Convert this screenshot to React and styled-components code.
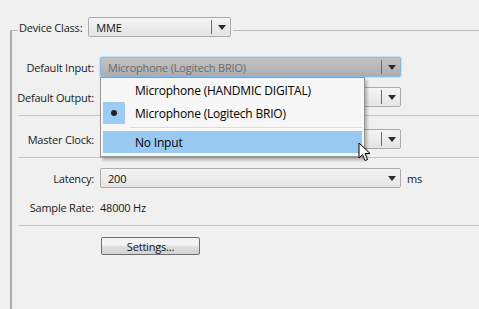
import React from 'react'
import styled, { createGlobalStyle } from 'styled-components'

const Global = createGlobalStyle`
	html, body {
		margin: 0;
		background: #f0f0f0;
		overflow: hidden;
	}
	body {
		font-family: "Open Sans", "Noto Sans", sans-serif;
		font-size: 11px;
		letter-spacing: -0.2px;
		color: #1a1a1a;
	}
`

const Page = styled.div`
	position: relative;
	width: 479px;
	height: 309px;
	padding-top: 30px;
	box-sizing: border-box;
	overflow: hidden;
`

const Frame = styled.div`
	margin-left: 10px;
	border-left: 2px solid #adadad;
	border-top: 1px solid #bcbcbc;
	height: 290px;
`

const Header = styled.div`
	display: flex;
	width: fit-content;
	align-items: center;
	margin-top: -14px;
	margin-left: 6px;
	padding: 0 2px 0 1px;
	gap: 6px;
	background: #f0f0f0;
	height: 20px;
`

const Label = styled.span`
	text-align: right;
	white-space: nowrap;
`

const Combo = styled.div`
	position: relative;
	box-sizing: border-box;
	width: ${p => p.$w}px;
	height: ${p => p.$h || 20}px;
	display: flex;
	align-items: center;
	padding-left: 7px;
	border: 1px solid ${p => (p.$open ? '#86b9ea' : '#acacac')};
	border-radius: 2px;
	background: ${p =>
		p.$open
			? 'linear-gradient(#c4c4c4, #adadad)'
			: 'linear-gradient(#f4f4f4, #e4e4e4)'};
	box-shadow: ${p => (p.$open ? '0 0 0 1px #c5e0f8' : 'none')};
	color: ${p => (p.$open ? '#6b6b6b' : '#111')};
	white-space: nowrap;
`

const ComboText = styled.span`
	flex: 1;
	overflow: hidden;
`

const ArrowBox = styled.span`
	width: 17px;
	height: 14px;
	display: flex;
	align-items: center;
	justify-content: center;
	border-left: ${p => (p.$divider ? '1px solid #6a6a6a' : 'none')};
	margin-right: 1px;

	&::after {
		content: '';
		border-left: 4px solid transparent;
		border-right: 4px solid transparent;
		border-top: 5px solid #2b2b2b;
		margin-left: 2px;
	}
`

const Section = styled.div`
	display: grid;
	grid-template-columns: 82px 301px auto;
	column-gap: 6px;
	row-gap: ${p => p.$gap || 10}px;
	align-items: center;
	margin-top: ${p => p.$top}px;
`

const Row = styled.div`
	display: contents;
`

const Rule = styled.div`
	margin-left: 6px;
	margin-top: ${p => p.$top}px;
	border-top: 1px solid #c5c5c5;
`

const Unit = styled.span`
	color: #1a1a1a;
`

const Value = styled.span`
	height: 20px;
	display: flex;
	align-items: center;
`

const Anchor = styled.div`
	position: relative;
`

const Popup = styled.div`
	position: absolute;
	z-index: 2;
	top: 100%;
	left: 0;
	width: 265px;
	box-sizing: border-box;
	padding: 1px 2px 2px;
	border: 1px solid #979797;
	background: #f7f7f7;
	box-shadow: 2px 3px 3px rgba(0, 0, 0, 0.28);
	font-size: 12px;
`

const Item = styled.div`
	height: 22px;
	margin-bottom: 1px;
	display: flex;
	align-items: center;
	background: ${p => (p.$hover ? '#98c9f3' : 'transparent')};
	color: #000;
	white-space: nowrap;
`

const Check = styled.span`
	width: 22px;
	height: 22px;
	margin-right: 10px;
	display: flex;
	align-items: center;
	justify-content: center;
	background: ${p => (p.$on ? '#9ccbf3' : 'transparent')};

	&::after {
		content: '';
		display: ${p => (p.$on ? 'block' : 'none')};
		width: 6px;
		height: 6px;
		border-radius: 50%;
		background: #222;
	}
`

const MenuRule = styled.div`
	height: 6px;
	display: flex;
	align-items: center;
	padding-left: 27px;

	&::after {
		content: '';
		flex: 1;
		border-top: 1px solid #dadada;
		border-bottom: 1px solid #fff;
	}
`

const Button = styled.button`
	display: block;
	margin: 11px 0 0 89px;
	width: 99px;
	height: 18px;
	padding: 0;
	border: 1px solid #707070;
	border-radius: 2px;
	background: linear-gradient(#f3f3f3 45%, #dddddd 55%, #d3d3d3);
	font: inherit;
	letter-spacing: inherit;
	color: #111;
	line-height: 15px;
`

const Cursor = styled.svg`
	position: absolute;
	left: 358px;
	top: 142px;
	z-index: 3;
`

function Arrow({ divider = true }) {
	return <ArrowBox $divider={divider} />
}

export default function App() {
	return (
		<Page>
			<Global />
			<Frame>
				<Header>
					<Label>Device Class:</Label>
					<Combo $w={143}>
						<ComboText>MME</ComboText>
						<Arrow />
					</Combo>
				</Header>

				<Section $top={20}>
					<Row>
						<Label>Default Input:</Label>
						<Anchor>
							<Combo $w={301} $open>
								<ComboText>Microphone (Logitech BRIO)</ComboText>
								<Arrow />
							</Combo>
							<Popup>
								<Item>
									<Check />
									Microphone (HANDMIC DIGITAL)
								</Item>
								<Item>
									<Check $on />
									Microphone (Logitech BRIO)
								</Item>
								<MenuRule />
								<Item $hover>
									<Check />
									No Input
								</Item>
							</Popup>
						</Anchor>
						<span />
					</Row>
					<Row>
						<Label>Default Output:</Label>
						<Combo $w={301}>
							<ComboText />
							<Arrow />
						</Combo>
						<span />
					</Row>
				</Section>
				<Rule $top={8} />

				<Section $top={13}>
					<Row>
						<Label>Master Clock:</Label>
						<Combo $w={301}>
							<ComboText />
							<Arrow />
						</Combo>
						<span />
					</Row>
				</Section>
				<Rule $top={8} />

				<Section $top={10} $gap={9}>
					<Row>
						<Label>Latency:</Label>
						<Combo $w={301}>
							<ComboText>200</ComboText>
							<Arrow divider={false} />
						</Combo>
						<Unit>ms</Unit>
					</Row>
					<Row>
						<Label>Sample Rate:</Label>
						<Value>48000 Hz</Value>
						<span />
					</Row>
				</Section>
				<Rule $top={8} />

				<Button>Settings...</Button>
			</Frame>

			<Cursor width="14" height="21" viewBox="0 0 14 21">
				<path
					d="M1 1 L1 16 L4.5 12.5 L7 18.5 L9.5 17.5 L7 11.5 L12 11.5 Z"
					fill="#fff"
					stroke="#000"
					strokeWidth="1"
					strokeLinejoin="round"
				/>
			</Cursor>
		</Page>
	)
}
